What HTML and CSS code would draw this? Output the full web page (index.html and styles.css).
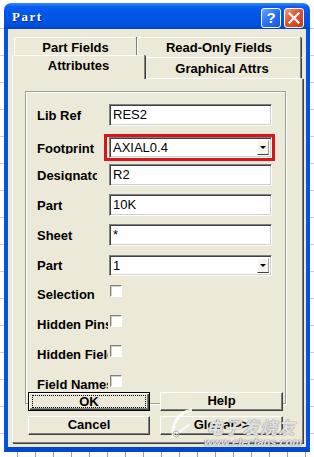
FILE: index.html
```html
<!DOCTYPE html>
<html lang="en">

<head>
    <meta charset="UTF-8">
    <title>Part</title>
    <link rel="stylesheet" href="styles.css">
</head>

<body>
    <div class="window">
        <div class="titlebar">
            <span class="title">Part</span>
            <div class="tb-btns">
                <span class="tb-btn tb-help">?</span>
                <span class="tb-btn tb-close">
                    <svg width="12" height="12" viewBox="0 0 12 12">
                        <path d="M1.5 1.5 L10.5 10.5 M10.5 1.5 L1.5 10.5" stroke="#fff" stroke-width="2.2" stroke-linecap="square" />
                    </svg>
                </span>
            </div>
        </div>
        <div class="frame">
            <div class="client">
                <div class="tabs">
                    <div class="tab-row back">
                        <div class="tab tab-a">Part Fields</div>
                        <div class="tab tab-b">Read-Only Fields</div>
                    </div>
                    <div class="tab-row front">
                        <div class="tab tab-c active">Attributes</div>
                        <div class="tab tab-d">Graphical Attrs</div>
                    </div>
                </div>
                <div class="panel">
                    <div class="group">
                        <div class="row">
                            <div class="lbl">Lib Ref</div>
                            <div class="edit">RES2</div>
                        </div>
                        <div class="row row-mark">
                            <div class="lbl lbl-mark">Footprint</div>
                            <div class="mark">
                                <div class="edit combo">AXIAL0.4<span class="drop"></span></div>
                            </div>
                        </div>
                        <div class="row">
                            <div class="lbl lbl-short">Designator</div>
                            <div class="edit">R2</div>
                        </div>
                        <div class="row">
                            <div class="lbl">Part</div>
                            <div class="edit">10K</div>
                        </div>
                        <div class="row">
                            <div class="lbl">Sheet</div>
                            <div class="edit">*</div>
                        </div>
                        <div class="row row-last">
                            <div class="lbl">Part</div>
                            <div class="edit combo">1<span class="drop"></span></div>
                        </div>
                        <div class="row">
                            <div class="lbl lbl-check">Selection</div>
                            <span class="check"></span>
                        </div>
                        <div class="row">
                            <div class="lbl lbl-check">Hidden Pins</div>
                            <span class="check"></span>
                        </div>
                        <div class="row">
                            <div class="lbl lbl-check">Hidden Fields</div>
                            <span class="check"></span>
                        </div>
                        <div class="row">
                            <div class="lbl lbl-check">Field Names</div>
                            <span class="check"></span>
                        </div>
                    </div>
                    <div class="buttons">
                        <div class="btn btn-default"><span class="focus">OK</span></div>
                        <div class="btn">Help</div>
                        <div class="btn">Cancel</div>
                        <div class="btn">Global&gt;&gt;</div>
                    </div>
                </div>
            </div>
        </div>
    </div>

    <!-- 水印 -->
    <div class="watermark">
        <svg class="wm-logo" width="40" height="40" viewBox="0 0 40 40">
            <path d="M6 34 C2 22 10 8 24 6" fill="none" stroke="#fff" stroke-width="3" opacity="0.85" />
            <path d="M8 30 L22 20" fill="none" stroke="#fff" stroke-width="2" opacity="0.85" />
            <circle cx="8" cy="30" r="3" fill="none" stroke="#bbb" stroke-width="1" />
        </svg>
        <div class="wm-cn">电子发烧友</div>
        <div class="wm-en">www.elecfans.com</div>
    </div>
</body>

</html>
```

FILE: styles.css
```css
* {
    padding: 0;
    margin: 0;
    box-sizing: border-box;
}

body {
    width: 314px;
    height: 457px;
    overflow: hidden;
    position: relative;
    font-family: "Liberation Sans", Arial, sans-serif;
    font-size: 13px;
    color: #000;
    background-color: #fff;
    background-image:
        repeating-linear-gradient(to bottom, transparent 0, transparent 26px, #c9cbd6 26px, #c9cbd6 27px),
        repeating-linear-gradient(to right, transparent 0, transparent 17px, #9a9aa0 17px, #9a9aa0 18px);
    background-size: 100% 100%, 100% 5px;
    background-position: 0 2px, 0 452px;
    background-repeat: repeat, repeat-x;
    padding: 3px 0 0 4px;
}

.window {
    width: 306px;
    height: 449px;
}

.titlebar {
    height: 26px;
    border-radius: 7px 7px 0 0;
    background: linear-gradient(to bottom, #3a8cf8 0%, #0a5fef 14%, #0055e6 45%, #0052e0 80%, #0043c6 100%);
    display: flex;
    align-items: center;
    justify-content: space-between;
    padding: 0 6px 0 8px;
}

.title {
    font-family: "Liberation Serif", "Times New Roman", serif;
    font-weight: bold;
    font-size: 13px;
    letter-spacing: 1.5px;
    color: #fff;
    text-shadow: 1px 1px #0a2a88;
    margin-top: 1px;
}

.tb-btns {
    display: flex;
    gap: 3px;
    margin-top: 3px;
}

.tb-btn {
    width: 20px;
    height: 20px;
    border: 1px solid #fff;
    border-radius: 3px;
    display: flex;
    align-items: center;
    justify-content: center;
    color: #fff;
    font-weight: bold;
    font-size: 15px;
}

.tb-help {
    background: linear-gradient(135deg, #6fa7ff 0%, #2a74f5 45%, #1557e0 100%);
}

.tb-close {
    background: linear-gradient(135deg, #f39a7c 0%, #e0552e 45%, #c23a14 100%);
}

.frame {
    height: 423px;
    border-left: 4px solid #0352e2;
    border-right: 4px solid #0352e2;
    border-bottom: 5px solid #0346d0;
}

.client {
    height: 418px;
    background: #ece9d8;
    padding: 8px 3px 4px 4px;
}

.tabs {
    height: 41px;
    padding-left: 2px;
}

.tab-row {
    display: flex;
}

.tab-row.back {
    height: 20px;
}

.tab-row.front {
    height: 21px;
}

.tab {
    background: #ece9d8;
    border-top: 1px solid #fff;
    border-left: 1px solid #fff;
    border-right: 1px solid #808080;
    box-shadow: 1px 0 #404040;
    border-radius: 2px 2px 0 0;
    font-weight: bold;
    text-align: center;
    height: 100%;
}

.back .tab {
    line-height: 19px;
}

.tab-a {
    width: 123px;
}

.tab-b {
    width: 164px;
}

.tab-c {
    width: 129px;
}

.tab-d {
    width: 158px;
    line-height: 22px;
}

.tab.active {
    position: relative;
    z-index: 1;
    width: 133px;
    height: 24px;
    margin-top: -2px;
    margin-left: -2px;
    margin-right: -2px;
    line-height: 20px;
}

.panel {
    width: 291px;
    height: 365px;
    border-top: 1px solid #fff;
    border-left: 1px solid #fff;
    border-right: 1px solid #808080;
    border-bottom: 1px solid #808080;
    box-shadow: 1px 1px #404040;
    padding: 12px 0 0 12px;
}

.group {
    width: 261px;
    border: 1px solid #a09e94;
    box-shadow: inset 1px 1px #fff, 1px 1px #fff;
    padding: 12px 0 9px 11px;
}

.row {
    display: flex;
    align-items: center;
    height: 22px;
    margin-bottom: 8px;
}

.row:last-child {
    margin-bottom: 0;
}

.row-mark {
    height: 27px;
    margin-bottom: 3px;
}

.row-last {
    margin-bottom: 6px;
}

/* 标签高度只到基线，下伸部分被裁掉 */
.lbl {
    flex: none;
    width: 72px;
    height: 12px;
    line-height: 14px;
    overflow: hidden;
    white-space: nowrap;
    font-weight: bold;
}

.lbl-mark {
    width: 67px;
}

.lbl-short {
    width: 60px;
    margin-right: 12px;
}

.lbl-check {
    width: 71px;
    margin-right: 2px;
    margin-top: 1px;
}

.edit {
    width: 163px;
    height: 22px;
    background: #fff;
    border-top: 1px solid #808080;
    border-left: 1px solid #808080;
    border-right: 1px solid #fff;
    border-bottom: 1px solid #fff;
    box-shadow: inset 1px 1px #404040, inset -1px -1px #d4d0c8;
    padding-left: 3px;
    line-height: 19px;
    white-space: nowrap;
}

.mark {
    height: 27px;
    border: 3px solid #d9141c;
    padding-left: 2px;
}

.combo {
    height: 21px;
    display: flex;
    align-items: center;
    justify-content: space-between;
    padding-right: 2px;
    line-height: 17px;
}

.mark .combo {
    width: 163px;
}

.drop {
    width: 12px;
    height: 15px;
    background: #f4f3ee;
    border-top: 1px solid #fff;
    border-left: 1px solid #fff;
    border-right: 1px solid #a0a0a0;
    border-bottom: 1px solid #404040;
    display: flex;
    align-items: center;
    justify-content: center;
}

.drop::after {
    content: "";
    border-left: 3px solid transparent;
    border-right: 3px solid transparent;
    border-top: 3px solid #000;
}

.check {
    width: 12px;
    height: 12px;
    background: #fff;
    border-top: 1px solid #808080;
    border-left: 1px solid #808080;
    border-right: 1px solid #fff;
    border-bottom: 1px solid #fff;
    box-shadow: inset 1px 1px #d4d0c8;
    margin-top: -4px;
}

.buttons {
    display: grid;
    grid-template-columns: 122px 123px;
    grid-auto-rows: 19px;
    column-gap: 10px;
    row-gap: 5px;
    margin: -12px 0 0 3px;
    position: relative;
}

.btn {
    background: #ece9d8;
    border-top: 1px solid #fff;
    border-left: 1px solid #fff;
    border-right: 1px solid #404040;
    border-bottom: 1px solid #404040;
    box-shadow: inset -1px -1px #808080;
    font-weight: bold;
    text-align: center;
    line-height: 16px;
}

.btn-default {
    border: 1px solid #000;
    box-shadow: inset 1px 1px #fff, inset -1px -1px #404040, inset -2px -2px #808080;
    padding: 2px 3px;
}

.focus {
    display: block;
    height: 13px;
    line-height: 12px;
    border: 1px dotted #000;
}

.watermark {
    position: absolute;
    left: 168px;
    top: 400px;
    width: 146px;
    height: 50px;
    pointer-events: none;
}

.wm-logo {
    position: absolute;
    left: 0;
    top: 4px;
}

.wm-cn {
    position: absolute;
    left: 38px;
    top: 14px;
    font-family: "Noto Sans CJK SC", sans-serif;
    font-size: 17px;
    font-style: italic;
    font-weight: bold;
    letter-spacing: 1px;
    color: rgba(255, 255, 255, 0.75);
    text-shadow: 0 0 1px #888, 0 0 1px #888;
}

.wm-en {
    position: absolute;
    left: 36px;
    top: 36px;
    font-size: 11px;
    font-weight: bold;
    font-style: italic;
    color: rgba(255, 255, 255, 0.8);
    text-shadow: 0 0 1px #777, 0 0 1px #777;
}
```
